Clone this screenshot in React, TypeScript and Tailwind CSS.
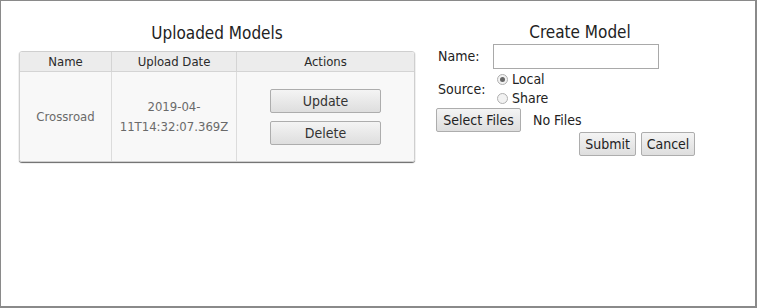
import React from "react";

const font = { fontFamily: '"DejaVu Sans Condensed", "Liberation Sans Narrow", Roboto, sans-serif' };

function Btn({ children, className = "" }: { children: React.ReactNode; className?: string }) {
  return (
    <button
      className={
        "border border-[#adadad] rounded-[2px] bg-gradient-to-b from-[#f4f4f4] to-[#dedede] text-[#222] leading-none " +
        className
      }
    >
      {children}
    </button>
  );
}

export default function App() {
  return (
    <div
      className="w-[757px] h-[308px] border border-[#8a8a8a] border-r-2 border-b-2 bg-white flex"
      style={font}
    >
      <div className="ml-[18px] w-[396px] pt-[20px] flex flex-col">
        <h2 className="text-[17px] leading-[25px] text-[#222] text-center">Uploaded Models</h2>
        <div className="mt-[5px] border border-[#cfcfcf] rounded-[3px] shadow-[0_1px_1px_#666] overflow-hidden">
          <div className="flex h-[20px] bg-[#ececec] border-b border-[#d4d4d4] text-[13px] text-[#2a2a2a]">
            <div className="w-[92px] flex items-center justify-center border-r border-[#d4d4d4]">Name</div>
            <div className="w-[125px] flex items-center justify-center border-r border-[#d4d4d4]">Upload Date</div>
            <div className="flex-1 flex items-center justify-center">Actions</div>
          </div>
          <div className="flex h-[89px] bg-[#f8f8f8] text-[13px] text-[#6a6a6a]">
            <div className="w-[92px] flex items-center justify-center border-r border-[#dcdcdc]">Crossroad</div>
            <div className="w-[125px] flex items-center justify-center border-r border-[#dcdcdc] text-center leading-[20px]">
              2019-04-
              <br />
              11T14:32:07.369Z
            </div>
            <div className="flex-1 flex flex-col items-center justify-center gap-[8px] pt-[1px]">
              <Btn className="w-[111px] h-[24px] text-[14px] text-[#333]">Update</Btn>
              <Btn className="w-[111px] h-[24px] text-[14px] text-[#333]">Delete</Btn>
            </div>
          </div>
        </div>
      </div>
      <div className="ml-[21px] w-[288px] pt-[20px] flex flex-col text-[14px] text-[#222]">
        <h2 className="text-[17px] leading-[23px] text-center">Create Model</h2>
        <div className="flex items-center h-[25px]">
          <span className="ml-[2px] w-[55px]">Name:</span>
          <input className="w-[166px] h-[25px] border border-[#a9a9a9] bg-white" />
        </div>
        <div className="flex items-center mt-[1px]">
          <span className="ml-[2px] w-[59px] pt-[1px]">Source:</span>
          <div className="flex flex-col">
            <label className="flex items-center h-[19px] gap-[4px]">
              <span className="w-[11px] h-[11px] rounded-full border border-[#b0b0b0] bg-[#f2f2f2] flex items-center justify-center">
                <span className="w-[5px] h-[5px] rounded-full bg-[#666]" />
              </span>
              Local
            </label>
            <label className="flex items-center h-[19px] gap-[4px]">
              <span className="w-[11px] h-[11px] rounded-full border border-[#b0b0b0] bg-[#f2f2f2]" />
              Share
            </label>
          </div>
        </div>
        <div className="flex items-center">
          <Btn className="w-[85px] h-[24px] text-[14px]">Select Files</Btn>
          <span className="ml-[12px]">No Files</span>
        </div>
        <div className="flex justify-end gap-[5px] mr-[29px]">
          <Btn className="w-[57px] h-[24px] text-[14px]">Submit</Btn>
          <Btn className="w-[54px] h-[24px] text-[14px]">Cancel</Btn>
        </div>
      </div>
    </div>
  );
}
